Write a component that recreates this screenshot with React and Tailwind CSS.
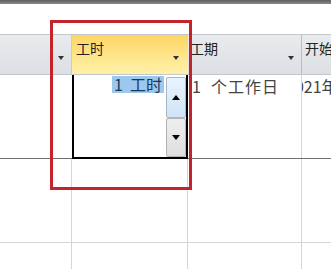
import React from "react";

const Arrow = ({ className = "" }) => (
  <span
    className={`block w-0 h-0 border-l-[3.5px] border-r-[3.5px] border-t-[4px] border-l-transparent border-r-transparent border-t-[#333] ${className}`}
  />
);

const SpinArrow = ({ up }) => (
  <span
    className={
      up
        ? "block w-0 h-0 border-l-[4px] border-r-[4px] border-b-[5px] border-l-transparent border-r-transparent border-b-black"
        : "block w-0 h-0 border-l-[4px] border-r-[4px] border-t-[5px] border-l-transparent border-r-transparent border-t-black"
    }
  />
);

const Editor = () => {
  return (
    <div className="flex h-full border-l-2 border-b-2 border-r-2 border-black bg-white">
      <div className="flex-1 flex justify-end items-start pt-[1px] pr-[2px]">
        <span className="bg-[#9cc8ee] text-[#1a3a5c] text-[16px] leading-[17px] pl-[2px] pr-[2px] whitespace-nowrap">
          1&nbsp;&nbsp;工时
        </span>
      </div>
      <div className="w-[20px] flex flex-col pt-[2px]">
        <div className="h-[41px] flex items-center justify-center border border-[#a9b6c4] rounded-[2px] bg-gradient-to-b from-[#eaf4fd] to-[#cfe4f7]">
          <SpinArrow up />
        </div>
        <div className="h-[40px] flex items-center justify-center border border-[#b3b3b3] rounded-[2px] bg-gradient-to-b from-[#efefef] to-[#dedede]">
          <SpinArrow />
        </div>
      </div>
    </div>
  );
};

const App = () => {
  return (
    <div
      className="relative w-[331px] h-[269px] overflow-hidden bg-white text-[#333]"
      style={{ fontFamily: '"Noto Sans CJK SC", "Noto Sans", sans-serif' }}
    >
      <div className="h-[4px] bg-gradient-to-b from-[#5f5f5f] to-[#8a8a8a]" />
      <div className="h-[30px]" />
      <div className="h-px bg-[#c4c6c9]" />
      {/* header */}
      <div className="flex h-[40px] border-b border-[#c3c6cb] bg-gradient-to-b from-[#e9ebee] to-[#dcdfe3]">
        <div className="w-[72px] shrink-0 relative border-r border-[#c9ccd0]">
          <Arrow className="absolute left-[58px] top-[21px]" />
        </div>
        <div className="w-[116px] shrink-0 relative bg-gradient-to-b from-[#fdd663] to-[#fff1a9] px-[4px] pt-[3px] text-[14px] leading-[20px] text-[#222]">
          工时
          <Arrow className="absolute left-[101px] top-[21px]" />
        </div>
        <div className="w-[114px] shrink-0 relative border-r border-[#b9bcc1] px-[2px] pt-[3px] text-[14px] leading-[20px] text-[#222]">
          工期
          <Arrow className="absolute left-[100px] top-[21px]" />
        </div>
        <div className="flex-1 min-w-0 overflow-hidden px-[3px] pt-[3px] text-[14px] leading-[20px] text-[#222] whitespace-nowrap">
          开始时
        </div>
      </div>
      {/* data row */}
      <div className="flex h-[84px] border-b border-[#6f6f6f]">
        <div className="w-[72px] shrink-0" />
        <div className="w-[116px] shrink-0 -mb-px">
          <Editor />
        </div>
        <div className="w-[114px] shrink-0 border-r border-[#d6d6d6] pl-[4px] pt-[1px] text-[16px] leading-[20px] text-[#444] whitespace-nowrap tracking-[1px]">
          1&nbsp;&nbsp;个工作日
        </div>
        <div className="flex-1 min-w-0 overflow-hidden pt-[1px] text-[16px] leading-[20px] text-[#444] whitespace-nowrap">
          <span className="block -ml-[16px]">2021年</span>
        </div>
      </div>
      {/* empty row */}
      <div className="flex h-[84px] border-b border-[#d6d6d6]">
        <div className="w-[72px] shrink-0 border-r border-[#d6d6d6]" />
        <div className="w-[116px] shrink-0 border-r border-[#d6d6d6]" />
        <div className="w-[114px] shrink-0 border-r border-[#d6d6d6]" />
        <div className="flex-1" />
      </div>
      <div className="flex h-[30px]">
        <div className="w-[72px] shrink-0 border-r border-[#d6d6d6]" />
        <div className="w-[116px] shrink-0 border-r border-[#d6d6d6]" />
        <div className="w-[114px] shrink-0 border-r border-[#d6d6d6]" />
        <div className="flex-1" />
      </div>
      {/* highlight frame */}
      <div className="absolute left-[50px] top-[20px] w-[142px] h-[170px] border-[3px] border-[#c3242b]" />
    </div>
  );
};

export default App;
